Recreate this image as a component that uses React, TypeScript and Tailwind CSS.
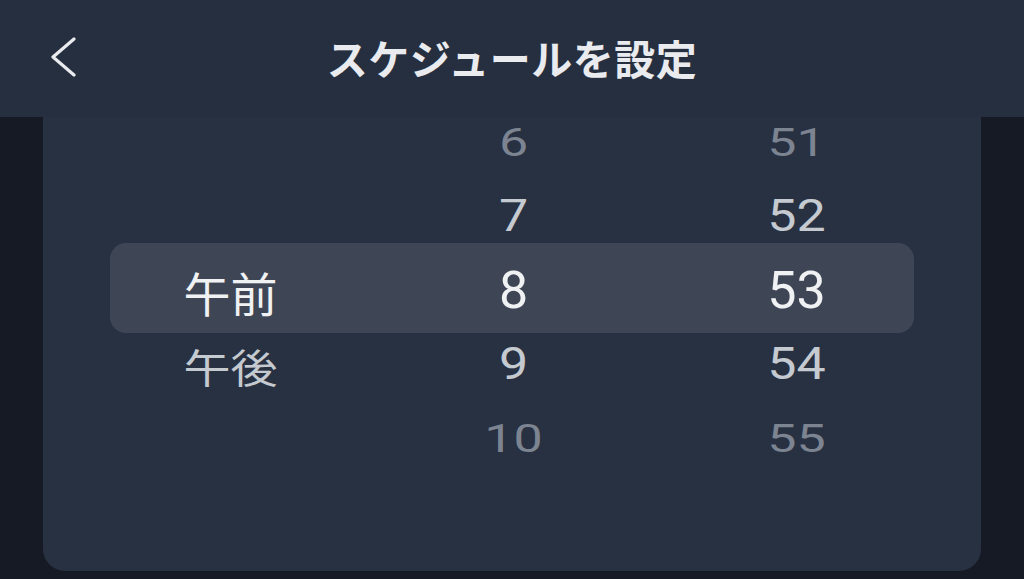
type Cell = { text: string; tone: "far" | "near" | "sel" };

const rows: Cell[][] = [
  [{ text: "", tone: "far" }, { text: "6", tone: "far" }, { text: "51", tone: "far" }],
  [{ text: "", tone: "near" }, { text: "7", tone: "near" }, { text: "52", tone: "near" }],
  [{ text: "午前", tone: "sel" }, { text: "8", tone: "sel" }, { text: "53", tone: "sel" }],
  [{ text: "午後", tone: "near" }, { text: "9", tone: "near" }, { text: "54", tone: "near" }],
  [{ text: "", tone: "far" }, { text: "10", tone: "far" }, { text: "55", tone: "far" }],
];

const toneClass = {
  far: "text-[#7d8491] scale-y-[0.74]",
  near: "text-[#c5c9d0] scale-y-[0.84]",
  sel: "text-[#f0f1f3]",
};

function PickerCell({ cell, kana }: { cell: Cell; kana: boolean }) {
  return (
    <div className="flex items-center justify-center">
      <span
        className={`${toneClass[cell.tone]} ${
          kana
            ? "font-['Noto_Sans_CJK_JP',sans-serif] text-[47px]"
            : "font-['Roboto',sans-serif] text-[52px]"
        } leading-none`}
      >
        {cell.text}
      </span>
    </div>
  );
}

export default function App() {
  return (
    <div className="w-[1024px] h-[579px] bg-[#151a25] overflow-hidden flex flex-col">
      <header className="h-[117px] shrink-0 bg-[#262f3f] grid grid-cols-[1fr_auto_1fr] items-center">
        <div className="pl-[51px] flex items-center">
          <svg width="26" height="40" viewBox="0 0 26 40" fill="none" className="-mt-[3px]">
            <polyline
              points="23,2 2,20 23,38"
              stroke="#e9ebee"
              strokeWidth="3.2"
              strokeLinecap="round"
              strokeLinejoin="round"
            />
          </svg>
        </div>
        <h1 className="font-['Noto_Sans_CJK_JP',sans-serif] font-bold text-[41px] leading-none text-[#e9ebef] tracking-[0.5px] -mt-[2px]">
          スケジュールを設定
        </h1>
        <div />
      </header>

      <div className="flex-1 px-[43px] pb-[8px]">
        <div className="relative h-full bg-[#283142] rounded-b-[22px] overflow-hidden">
          <div className="absolute left-[67px] right-[67px] top-[126px] h-[90px] rounded-[16px] bg-[#3e4656]" />
          <div className="relative -mt-[11px] pl-[46px]">
            {rows.map((row, i) => (
              <div key={i} className="h-[74px] grid grid-cols-[283px_283px_283px]">
                {row.map((cell, j) => (
                  <PickerCell key={j} cell={cell} kana={j === 0} />
                ))}
              </div>
            ))}
          </div>
        </div>
      </div>
    </div>
  );
}
